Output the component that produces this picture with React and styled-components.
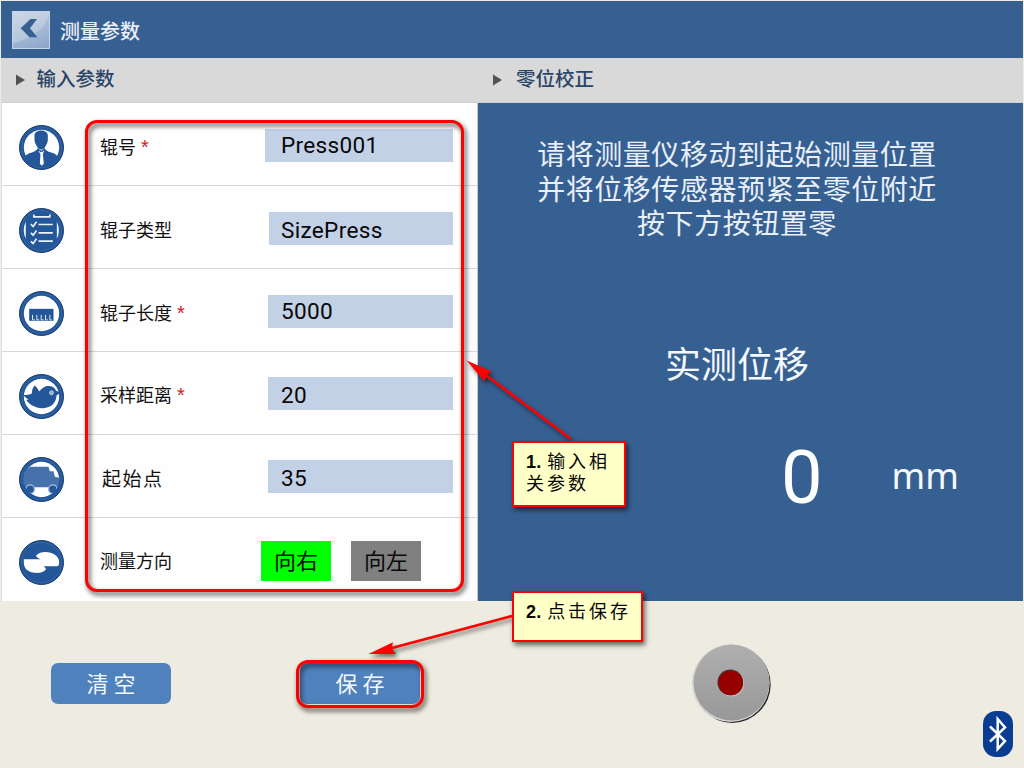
import React from "react";
import styled, { createGlobalStyle } from "styled-components";

const GlobalStyle = createGlobalStyle`
  * { box-sizing: border-box; }
  body {
    margin: 0;
    background: #eeebe0;
    font-family: "Noto Sans CJK SC", "Noto Sans", sans-serif;
  }
`;

const Screen = styled.div`
  position: relative;
  width: 1024px;
  height: 768px;
  padding: 1px 1px 0;
  overflow: hidden;
  background: #eeebe0;
  display: flex;
  flex-direction: column;
`;

const TopBar = styled.header`
  height: 57px;
  flex: none;
  display: flex;
  align-items: center;
  gap: 10px;
  padding: 0 0 0 11px;
  background: #376092;
`;

const BackButton = styled.button`
  width: 38px;
  height: 38px;
  margin: 0;
  padding: 0;
  border: 1px solid #c5d3e6;
  background: linear-gradient(160deg, #c3d0e2 0%, #a9bcd6 48%, #8ba5c9 100%);
  display: flex;
`;

const Title = styled.h1`
  margin: 2px 0 0;
  font-size: 20px;
  line-height: 30px;
  font-weight: 500;
  color: #e9eff7;
`;

const SectionBar = styled.div`
  height: 45px;
  flex: none;
  display: flex;
  background: #d9d9d9;
  border-bottom: 1px solid #cfd0d0;
`;

const SectionTitle = styled.h2`
  width: ${(p) => p.$width};
  margin: 0;
  padding: 0 0 4px 15px;
  display: flex;
  align-items: center;
  gap: ${(p) => p.$gap}px;
  font-size: 19.5px;
  font-weight: 500;
  line-height: 30px;
  color: #2a4568;
  svg { margin-top: 4px; }
`;

const Body = styled.main`
  height: 498px;
  flex: none;
  display: flex;
`;

const Form = styled.form`
  width: 477px;
  flex: none;
  background: #fefefe;
  border-left: 1px solid #e2e1dc;
  border-right: 1px solid #c9ccd6;
`;

const Row = styled.div`
  height: 83px;
  display: flex;
  border-bottom: 1px solid ${(p) => (p.$last ? "transparent" : "#d6d7d9")};
`;

const IconCell = styled.div`
  width: 98px;
  flex: none;
  padding: 21px 0 0 16px;
`;

const Label = styled.label`
  flex: 1;
  padding-top: ${(p) => p.$top}px;
  padding-left: ${(p) => (p.$wide ? "2px" : "0")};
  font-size: ${(p) => (p.$wide ? "19px" : "18px")};
  letter-spacing: ${(p) => (p.$wide ? "1.5px" : "0")};
  line-height: 26px;
  color: #111;
  white-space: nowrap;
`;

const Required = styled.span`
  margin-left: 5px;
  color: #d02020;
  font-family: "Liberation Sans", sans-serif;
  font-size: 20px;
`;

const Field = styled.div`
  width: ${(p) => p.$width}px;
  height: 33px;
  margin: ${(p) => p.$top}px 24px 0 0;
  padding: ${(p) => p.$textTop}px 0 0 ${(p) => p.$width - 172}px;
  background: #c3d1e7;
  font-family: Roboto, sans-serif;
  font-size: 22.6px;
  letter-spacing: 0.3px;
  line-height: 26px;
  color: #080808;
`;

const Directions = styled.div`
  display: flex;
  gap: 20px;
  margin: 23px 56px 0 0;
`;

const Direction = styled.button`
  width: 70px;
  height: 40px;
  padding: 0 0 3px;
  border: 0;
  background: ${(p) => (p.$active ? "#00ff00" : "#808080")};
  font: 400 22px/37px "Noto Sans CJK SC", sans-serif;
  color: #080808;
`;

const Calibration = styled.section`
  flex: 1;
  background: #376092;
  color: #f5f8fc;
  display: flex;
  flex-direction: column;
`;

const Instructions = styled.p`
  margin: 36px 27px 0 0;
  font-family: "Liberation Sans", "Noto Sans CJK SC", sans-serif;
  font-size: 28px;
  letter-spacing: 0.55px;
  line-height: 34.5px;
  font-weight: 400;
  color: #e8eff8;
  text-align: center;
`;

const ReadingTitle = styled.h3`
  margin: 92px 27px 0 0;
  font-size: 36px;
  line-height: 54px;
  font-weight: 400;
  text-align: center;
`;

const Reading = styled.div`
  display: flex;
  align-items: baseline;
  margin-top: 44px;
  padding-left: 303px;
  gap: 69px;
  line-height: 90px;
`;

const Digits = styled.span`
  font-family: Roboto, sans-serif;
  font-size: 74px;
  color: #fff;
`;

const Unit = styled.span`
  font-family: "Noto Sans", sans-serif;
  font-size: 36px;
  line-height: 50px;
  position: relative;
  top: -14px;
`;

const Footer = styled.footer`
  flex: 1;
  display: flex;
  align-items: flex-start;
  padding: 43px 0 0 50px;
`;

const ActionButton = styled.button`
  width: 120px;
  height: 41px;
  margin: 19px ${(p) => p.$after}px 0 0;
  padding: 0 0 2px 5px;
  border: 0;
  border-radius: 7px;
  background: #4f81bd;
  font: 400 22px/37px "Noto Sans CJK SC", sans-serif;
  letter-spacing: 5px;
  color: #f2f7fd;
`;

const RecordButton = styled.button`
  width: 80px;
  height: 80px;
  padding: 0;
  border: 0;
  background: none;
`;

const Bluetooth = styled.div`
  width: 30px;
  height: 46px;
  margin: 67px 0 0 212px;
  border-radius: 13px;
  background: #0a3d91;
  svg { display: block; }
`;

const Highlight = styled.div`
  position: absolute;
  left: ${(p) => p.$x}px;
  top: ${(p) => p.$y}px;
  width: ${(p) => p.$w}px;
  height: ${(p) => p.$h}px;
  border: 3px solid #fe0000;
  border-radius: 12px;
  filter: drop-shadow(2px 3px 2.5px rgba(0, 0, 0, 0.75));
  pointer-events: none;
`;

const Note = styled.div`
  position: absolute;
  left: 512px;
  top: ${(p) => p.$y}px;
  width: ${(p) => p.$w}px;
  height: ${(p) => p.$h}px;
  padding: 8px 0 0 12px;
  border: 2px solid #fe0000;
  background: #ffffc8;
  box-shadow: 2px 3px 5px rgba(0, 0, 0, 0.6);
  font-family: "Liberation Sans", "Noto Sans CJK SC", sans-serif;
  font-size: 18px;
  line-height: 22px;
  letter-spacing: 3px;
  color: #080808;
  white-space: nowrap;
  b {
    letter-spacing: 0.3px;
    margin-right: 5.5px;
  }
`;

const Arrows = styled.svg`
  position: absolute;
  left: 0;
  top: 0;
  pointer-events: none;
  filter: drop-shadow(2px 3px 2px rgba(0, 0, 0, 0.55));
`;

const BLUE = "#23579a";

function Badge({ hollow, children }) {
  return (
    <svg width="47" height="47" viewBox="-70.5 -70.5 141 141">
      <circle r="66" fill={BLUE} stroke="#183c6c" strokeWidth="3" />
      <circle r="60" fill="none" stroke="#3d6da8" strokeWidth="2" />
      {hollow && <circle r="53" fill="#fff" />}
      {children}
    </svg>
  );
}

const PersonIcon = () => (
  <Badge hollow>
    <path d="M-21-36C-21-56 19-56 19-36V-22C19-12 11-5 8 3L-1 7L-10 3C-13-5-21-12-21-22Z" fill={BLUE} />
    <path d="M-50 32C-48 20-37 17-27 14C-19 11-14 7-11 2L-1 10L9 2C13 8 19 12 27 14C38 17 47 20 49 32L38 48Q0 70-38 48Z" fill={BLUE} />
    <path d="M-10 9L-1 15L8 9L4 20L7 49L1 55L-5 49L-3 20Z" fill="#fff" />
  </Badge>
);

const ChecklistIcon = () => (
  <Badge>
    <g fill="none" stroke="#eaf2fb" strokeWidth="5">
      <path d="M-23-48V-41H25V-48" />
      <path d="M-32-19L-25-12L-15-26M-32 7L-25 14L-15 0M-32 33L-25 39L-15 25" />
      <path d="M-9-18H34M-9 7H34M-9 32H34" />
    </g>
    <path d="M-47-27Q-60 0-47 25ZM46-27Q59 0 46 25Z" fill="#eaf2fb" />
  </Badge>
);

const RulerIcon = () => (
  <Badge hollow>
    <path d="M-37-14H36V22H-37Z" fill={BLUE} />
    <path d="M-27 4V19H-20M-14 4V19H-7M-1 4V19H6M12 4V19H19M25 4V19H31" fill="none" stroke="#d9e6f4" strokeWidth="3" />
  </Badge>
);

const BirdIcon = () => (
  <Badge hollow>
    <path d="M-54-4C-40-5-35-6-29-9C-29-20-25-29-20-33C-15-28-10-22-7-15C-1-23 3-26 8-28C14-34 39-33 43-18L57-11L45-3C44 19 29 34 5 35C-18 36-39 23-46 10L-38 9C-44 6-49 2-54-4Z" fill={BLUE} />
    <circle cx="30" cy="-11" r="6" fill="#8db0d5" stroke="#dce8f5" strokeWidth="2" />
  </Badge>
);

const VanIcon = () => (
  <Badge hollow>
    <path d="M-48-26L-35-38H21L25-25H36L40-8L53-5V23H-54V-18Z" fill="#4671aa" />
    <circle cx="-34" cy="29" r="13" fill={BLUE} stroke="#a9c0dd" strokeWidth="4" />
    <circle cx="34" cy="29" r="13" fill={BLUE} stroke="#a9c0dd" strokeWidth="4" />
    <path d="M-56 15A58 58 0 0 0-22 53" fill="none" stroke={BLUE} strokeWidth="9" />
    <path d="M56 15A58 58 0 0 1 22 53" fill="none" stroke={BLUE} strokeWidth="9" />
  </Badge>
);

const ExchangeIcon = () => (
  <Badge>
    <path d="M-53-10H-3Q-13-13-17-20C-7-31 5-32 18-31C38-30 53-17 53-1Q54 8 48 11H7Q11 16 14 20C5 30-7 32-20 31C-41 30-53 17-53 1Z" fill="#fff" />
  </Badge>
);

const fields = [
  { label: "辊号", required: true, value: "Press001", Icon: PersonIcon, width: 188.5, top: 26, textTop: 4, labelTop: 30 },
  { label: "辊子类型", value: "SizePress", Icon: ChecklistIcon, width: 184.5, top: 25.5, textTop: 6.5, labelTop: 30 },
  { label: "辊子长度", required: true, value: "5000", Icon: RulerIcon, width: 185.5, top: 25.5, textTop: 4.5, labelTop: 29.5 },
  { label: "采样距离", required: true, value: "20", Icon: BirdIcon, width: 185.5, top: 25, textTop: 6, labelTop: 29 },
  { label: "起始点", wide: true, value: "35", Icon: VanIcon, width: 185.5, top: 25, textTop: 6, labelTop: 30 },
];

const Triangle = () => (
  <svg width="10" height="12" viewBox="0 0 10 12">
    <path d="M0 0.5L9 6L0 11.5Z" fill="#505357" />
  </svg>
);

export default function App() {
  return (
    <Screen>
      <GlobalStyle />
      <TopBar>
        <BackButton type="button" aria-label="返回">
          <svg width="36" height="36" viewBox="0 0 36 36">
            <path d="M0 0H36C35 14 20 27 0 31Z" fill="#dce4ef" opacity=".35" />
            <path d="M24 7H17.5L7.7 16.3L16.5 25.3H24.3L17 16.3Z" fill="#376092" />
          </svg>
        </BackButton>
        <Title>测量参数</Title>
      </TopBar>
      <SectionBar>
        <SectionTitle $width="477px" $gap={10.5}><Triangle />输入参数</SectionTitle>
        <SectionTitle $width="545px" $gap={13}><Triangle />零位校正</SectionTitle>
      </SectionBar>
      <Body>
        <Form>
          {fields.map(({ label, required, wide, value, Icon, width, top, textTop, labelTop }) => (
            <Row key={label}>
              <IconCell><Icon /></IconCell>
              <Label $wide={wide} $top={labelTop}>{label}{required && <Required>*</Required>}</Label>
              <Field $width={width} $top={top} $textTop={textTop}>{value}</Field>
            </Row>
          ))}
          <Row $last>
            <IconCell><ExchangeIcon /></IconCell>
            <Label $top={29}>测量方向</Label>
            <Directions>
              <Direction type="button" $active>向右</Direction>
              <Direction type="button">向左</Direction>
            </Directions>
          </Row>
        </Form>
        <Calibration>
          <Instructions>
            请将测量仪移动到起始测量位置<br />
            并将位移传感器预紧至零位附近<br />
            按下方按钮置零
          </Instructions>
          <ReadingTitle>实测位移</ReadingTitle>
          <Reading><Digits>0</Digits><Unit>mm</Unit></Reading>
        </Calibration>
      </Body>
      <Footer>
        <ActionButton type="button" $after={129}>清空</ActionButton>
        <ActionButton type="button" $after={271}>保存</ActionButton>
        <RecordButton type="button" aria-label="置零">
          <svg width="80" height="80" viewBox="0 0 80 80">
            <defs>
              <linearGradient id="disc" x1="0" y1="0" x2="0" y2="1">
                <stop offset="0" stopColor="#afafaf" />
                <stop offset="1" stopColor="#989898" />
              </linearGradient>
            </defs>
            <circle cx="41.2" cy="40.4" r="38.5" fill="#292929" />
            <circle cx="39.8" cy="39.2" r="38.8" fill="#d4d4d4" />
            <circle cx="40.5" cy="38.5" r="37.9" fill="url(#disc)" />
            <circle cx="40.3" cy="39.5" r="13" fill="#bcbcbc" />
            <circle cx="39.3" cy="38.4" r="12.8" fill="#4b3030" />
            <circle cx="39.8" cy="39" r="12.2" fill="#980000" />
          </svg>
        </RecordButton>
        <Bluetooth>
          <svg width="30" height="46" viewBox="0 0 30 46" fill="none" stroke="#fff" strokeWidth="2.5">
            <path d="M7 15.5L22 30L14.7 38V8L22 16.5L7 30.5" />
          </svg>
        </Bluetooth>
      </Footer>

      <Highlight $x={84.5} $y={119.5} $w={379} $h={472.5} />
      <Highlight $x={296} $y={660} $w={128} $h={48} />
      <Arrows width="1024" height="768" viewBox="0 0 1024 768" fill="#fe0000">
        <path d="M571 439L485 374.5M512 616L390 648.5" stroke="#fe0000" strokeWidth="2.8" />
        <path d="M466.5 360.5L492 371.5L486.5 375L484.5 381.5Z" />
        <path d="M368.5 654L393 642.3L391.5 648.3L396 654Z" />
      </Arrows>
      <Note $y={441} $w={114} $h={66}><b>1.</b>输入相<br />关参数</Note>
      <Note $y={591} $w={131} $h={51}><b>2.</b>点击保存</Note>
    </Screen>
  );
}
